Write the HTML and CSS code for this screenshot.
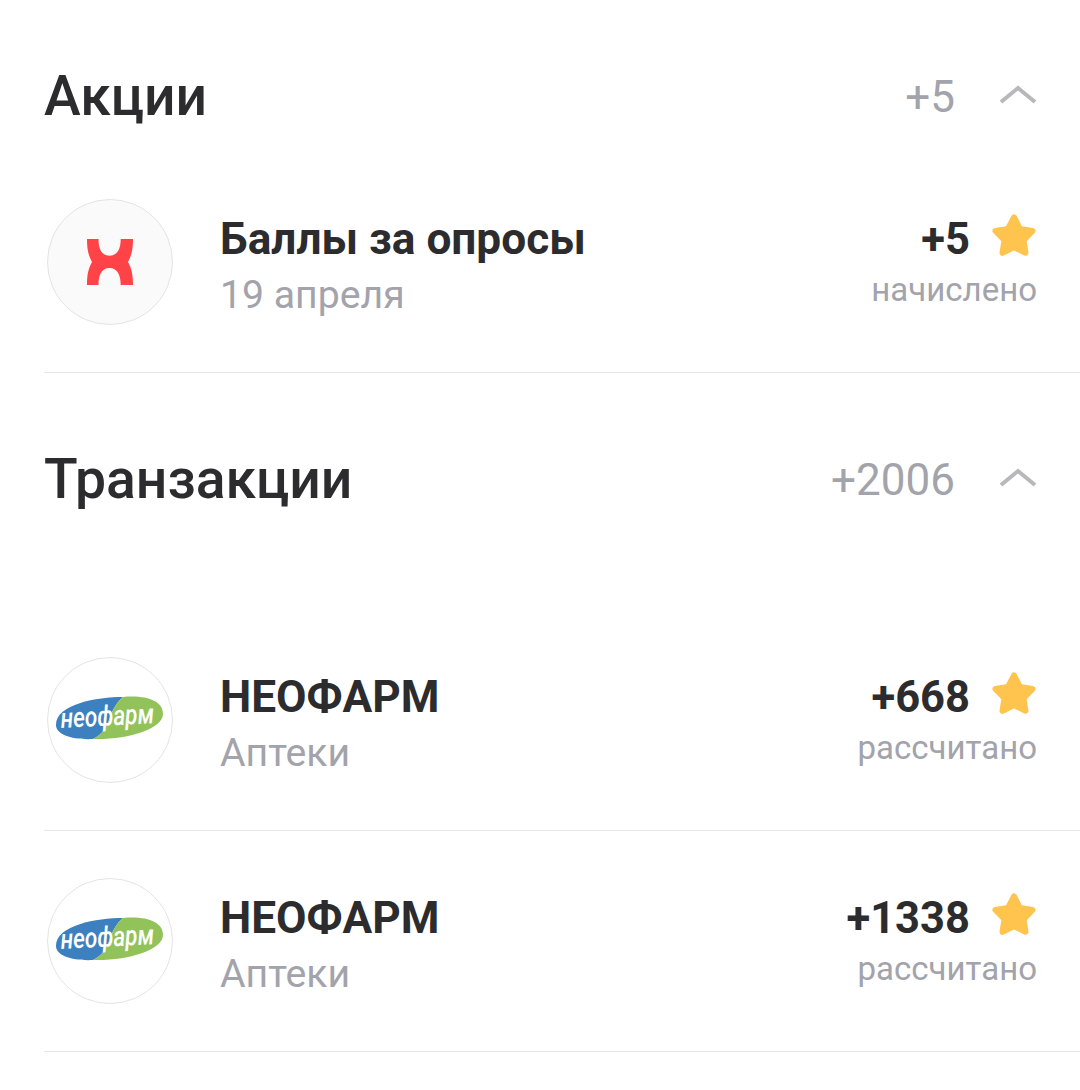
FILE: index.html
```html
<!DOCTYPE html>
<html lang="ru">
<head>
    <meta charset="UTF-8">
    <title>Баллы</title>
    <link rel="stylesheet" href="styles.css">
</head>
<body>
    <section class="section">
        <div class="section-head">
            <h2 class="section-title">Акции</h2>
            <span class="section-sum">+5</span>
            <svg class="chevron" width="38" height="20" viewBox="0 0 38 20"><path d="M2 17 L19 3 L36 17"/></svg>
        </div>
        <div class="row">
            <div class="logo logo-grey">
                <svg width="124" height="124" viewBox="0 0 124 124"><path fill="#ff4347" d="M39 39H50.5C50.5 48 53 55.7 61.5 55.7C70 55.7 72.7 48 72.7 39H85C85 48 84 55 80 62C84 69 85 76 85 85H72.7C72.7 76 70 68 61.5 68C53 68 50.5 76 50.5 85H39C39 76 40 69 44 62C40 55 39 48 39 39Z"/></svg>
            </div>
            <div class="row-text">
                <div class="row-name">Баллы за опросы</div>
                <div class="row-sub">19 апреля</div>
            </div>
            <div class="row-right">
                <div class="points">+5
                    <svg class="star" width="46" height="44" viewBox="0 0 46 44"><path d="M23 3.5 L28.9 14.9 L41.5 17 L32.5 26.1 L34.5 38.8 L23 33 L11.5 38.8 L13.5 26.1 L4.5 17 L17.1 14.9 Z"/></svg>
                </div>
                <div class="status">начислено</div>
            </div>
        </div>
    </section>

    <section class="section section-second">
        <div class="section-head">
            <h2 class="section-title">Транзакции</h2>
            <span class="section-sum">+2006</span>
            <svg class="chevron" width="38" height="20" viewBox="0 0 38 20"><path d="M2 17 L19 3 L36 17"/></svg>
        </div>
        <div class="rows">
            <div class="row">
                <div class="logo">
                    <svg width="124" height="124" viewBox="0 0 124 124">
                        <path fill="#3c80c0" d="M75 39C49 39 8 46 8 67C8 77 25 82 45 81C54 77 59 69 62 59C65 51 69 44 75 39Z"/>
                        <path fill="#92c25a" d="M75 39C99 37 115 43 115 56C115 71 79 82 45 81C54 77 59 69 62 59C65 51 69 44 75 39Z"/>
                        <text class="logo-word" transform="translate(13 70) rotate(-3) scale(.81 1)">неофарм</text>
                    </svg>
                </div>
                <div class="row-text">
                    <div class="row-name">НЕОФАРМ</div>
                    <div class="row-sub">Аптеки</div>
                </div>
                <div class="row-right">
                    <div class="points">+668
                        <svg class="star" width="46" height="44" viewBox="0 0 46 44"><path d="M23 3.5 L28.9 14.9 L41.5 17 L32.5 26.1 L34.5 38.8 L23 33 L11.5 38.8 L13.5 26.1 L4.5 17 L17.1 14.9 Z"/></svg>
                    </div>
                    <div class="status">рассчитано</div>
                </div>
            </div>
            <div class="row">
                <div class="logo">
                    <svg width="124" height="124" viewBox="0 0 124 124">
                        <path fill="#3c80c0" d="M75 39C49 39 8 46 8 67C8 77 25 82 45 81C54 77 59 69 62 59C65 51 69 44 75 39Z"/>
                        <path fill="#92c25a" d="M75 39C99 37 115 43 115 56C115 71 79 82 45 81C54 77 59 69 62 59C65 51 69 44 75 39Z"/>
                        <text class="logo-word" transform="translate(13 70) rotate(-3) scale(.81 1)">неофарм</text>
                    </svg>
                </div>
                <div class="row-text">
                    <div class="row-name">НЕОФАРМ</div>
                    <div class="row-sub">Аптеки</div>
                </div>
                <div class="row-right">
                    <div class="points">+1338
                        <svg class="star" width="46" height="44" viewBox="0 0 46 44"><path d="M23 3.5 L28.9 14.9 L41.5 17 L32.5 26.1 L34.5 38.8 L23 33 L11.5 38.8 L13.5 26.1 L4.5 17 L17.1 14.9 Z"/></svg>
                    </div>
                    <div class="status">рассчитано</div>
                </div>
            </div>
        </div>
    </section>
</body>
</html>
```

FILE: styles.css
```css
body {
    margin: 0;
    background: #fff;
    font-family: 'Roboto', sans-serif;
    color: #2c2c2e;
}

.section {
    margin-left: 44px;
    padding-top: 60px;
}

.section-second {
    padding-top: 70px;
}

.section-head {
    display: flex;
    align-items: center;
    height: 74px;
    padding-right: 43px;
    margin-bottom: 18px;
}

.section-second .section-head {
    margin-bottom: 93px;
}

.section-title {
    margin: 0;
    margin-right: auto;
    font-size: 55.3px;
    font-weight: 500;
    line-height: 74px;
}

.section-sum {
    font-size: 44px;
    line-height: 72px;
    margin-bottom: 1px;
    color: #a3a3ab;
    margin-right: 44px;
}

.chevron {
    fill: none;
    stroke: #b8b8bb;
    stroke-width: 4;
    margin-bottom: 4px;
}

.row {
    display: flex;
    align-items: center;
    height: 220px;
    border-bottom: 1px solid #e6e6e8;
}

.logo {
    width: 124px;
    height: 124px;
    margin-left: 3px;
    border: 1px solid #e4e4e6;
    border-radius: 50%;
    background: #fff;
    flex-shrink: 0;
}

.logo-grey {
    background: #fafafb;
}

.logo svg {
    display: block;
}

.logo-word {
    font-family: 'Roboto', sans-serif;
    font-size: 28px;
    font-style: italic;
    font-weight: 500;
    fill: #fff;
}

.row-text {
    margin-left: 47px;
    padding-top: 13px;
}

.row-name {
    font-size: 44.2px;
    font-weight: 700;
    line-height: 54px;
}

.row-sub {
    font-size: 39.2px;
    line-height: 59px;
    color: #a3a3ab;
}

.row-right {
    margin-left: auto;
    padding-right: 43px;
    padding-top: 4px;
    text-align: right;
}

.points {
    display: flex;
    align-items: center;
    justify-content: flex-end;
    gap: 21px;
    font-size: 43.5px;
    font-weight: 700;
    line-height: 50px;
}

.star {
    fill: #ffc44d;
    stroke: #ffc44d;
    stroke-width: 6;
    stroke-linejoin: round;
    margin-bottom: 8px;
}

.status {
    font-size: 33px;
    line-height: 48px;
    color: #a3a3ab;
}
```
